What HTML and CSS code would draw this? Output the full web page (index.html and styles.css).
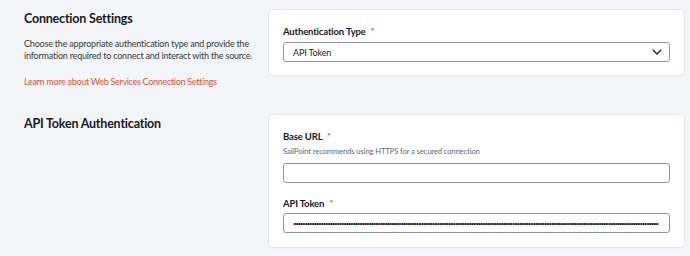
FILE: index.html
```html
<!DOCTYPE html>
<html>
<head>
<meta charset="utf-8">
<link rel="stylesheet" href="styles.css">
</head>
<body>
<div class="page">
  <section class="row">
    <div class="intro">
      <h2 class="title">Connection Settings</h2>
      <p class="desc">Choose the appropriate authentication type and provide the information required to connect and interact with the source.</p>
      <a class="link">Learn more about Web Services Connection Settings</a>
    </div>
    <div class="card card-one">
      <div class="label">Authentication Type <span class="req">*</span></div>
      <div class="select">
        <span>API Token</span>
        <svg class="chev" width="10" height="6" viewBox="0 0 10 6"><path d="M0.8 0.8 L5 5 L9.2 0.8" fill="none" stroke="#1b1f24" stroke-width="1.3"/></svg>
      </div>
    </div>
  </section>
  <section class="row">
    <div class="intro">
      <h2 class="title">API Token Authentication</h2>
    </div>
    <div class="card card-two">
      <div class="label">Base URL <span class="req">*</span></div>
      <div class="help">SailPoint recommends using HTTPS for a secured connection</div>
      <div class="input url"></div>
      <div class="label label-gap">API Token <span class="req">*</span></div>
      <div class="input pw"><span class="dots">••••••••••••••••••••••••••••••••••••••••••••••••••••••••••••••••••••••••••••••••••••••••••••••••••••••••••••••••••••••••••••••••••••••••••••••••••••••••••••••••</span></div>
    </div>
  </section>
</div>
</body>
</html>
```
FILE: styles.css
```css
* { box-sizing: border-box; }
html, body { margin: 0; padding: 0; }
body {
  background: #f3f5f8;
  font-family: "Lato", "Noto Sans", sans-serif;
  color: #1b1f24;
  width: 690px;
  height: 256px;
  overflow: hidden;
}
.page {
  padding: 10px 6px 0 24px;
  display: flex;
  flex-direction: column;
  gap: 27px;
}
.row {
  display: grid;
  grid-template-columns: 245px 415px;
  align-items: start;
}
.intro { padding-top: 1px; }
.title {
  margin: 0;
  font-size: 12.5px;
  font-weight: 700;
  letter-spacing: -0.2px;
  line-height: 16px;
  color: #16191d;
}
.desc {
  margin: 11px 0 0;
  width: 232px;
  font-size: 9px;
  letter-spacing: -0.2px;
  line-height: 12px;
  color: #333a42;
}
.link {
  display: block;
  margin-top: 14px;
  font-size: 9px;
  letter-spacing: -0.3px;
  line-height: 12px;
  color: #d4553a;
}
.card {
  background: #fff;
  border-radius: 4px;
  box-shadow: 0 0 0 1px #e4e8ed, 0 1px 2px rgba(0,0,0,0.07);
  padding: 15px 14px 0;
}
.card-one { height: 65px; }
.card-two { height: 132px; }
.label {
  font-size: 9.5px;
  font-weight: 700;
  letter-spacing: -0.15px;
  line-height: 13px;
  color: #16191d;
}
.label-gap { margin-top: 14px; }
.req { color: #d6204a; font-size: 8px; margin-left: 3px; vertical-align: 1px; }
.select, .input {
  margin-top: 4px;
  height: 20px;
  border: 1px solid #8e96a0;
  border-radius: 3px;
  background: #fff;
  font-size: 9px;
  letter-spacing: -0.15px;
  display: flex;
  align-items: center;
  padding: 0 9px;
  color: #1b1f24;
}
.select { justify-content: space-between; padding-right: 7px; }
.help {
  margin-top: 3px;
  font-size: 7.6px;
  letter-spacing: -0.1px;
  line-height: 11px;
  color: #5f6873;
}
.url { margin-top: 6px; }
.pw {
  margin-top: 3px;
}
.dots {
  white-space: nowrap;
  font-size: 6px;
  letter-spacing: -1.2px;
  color: #222;
}
```
